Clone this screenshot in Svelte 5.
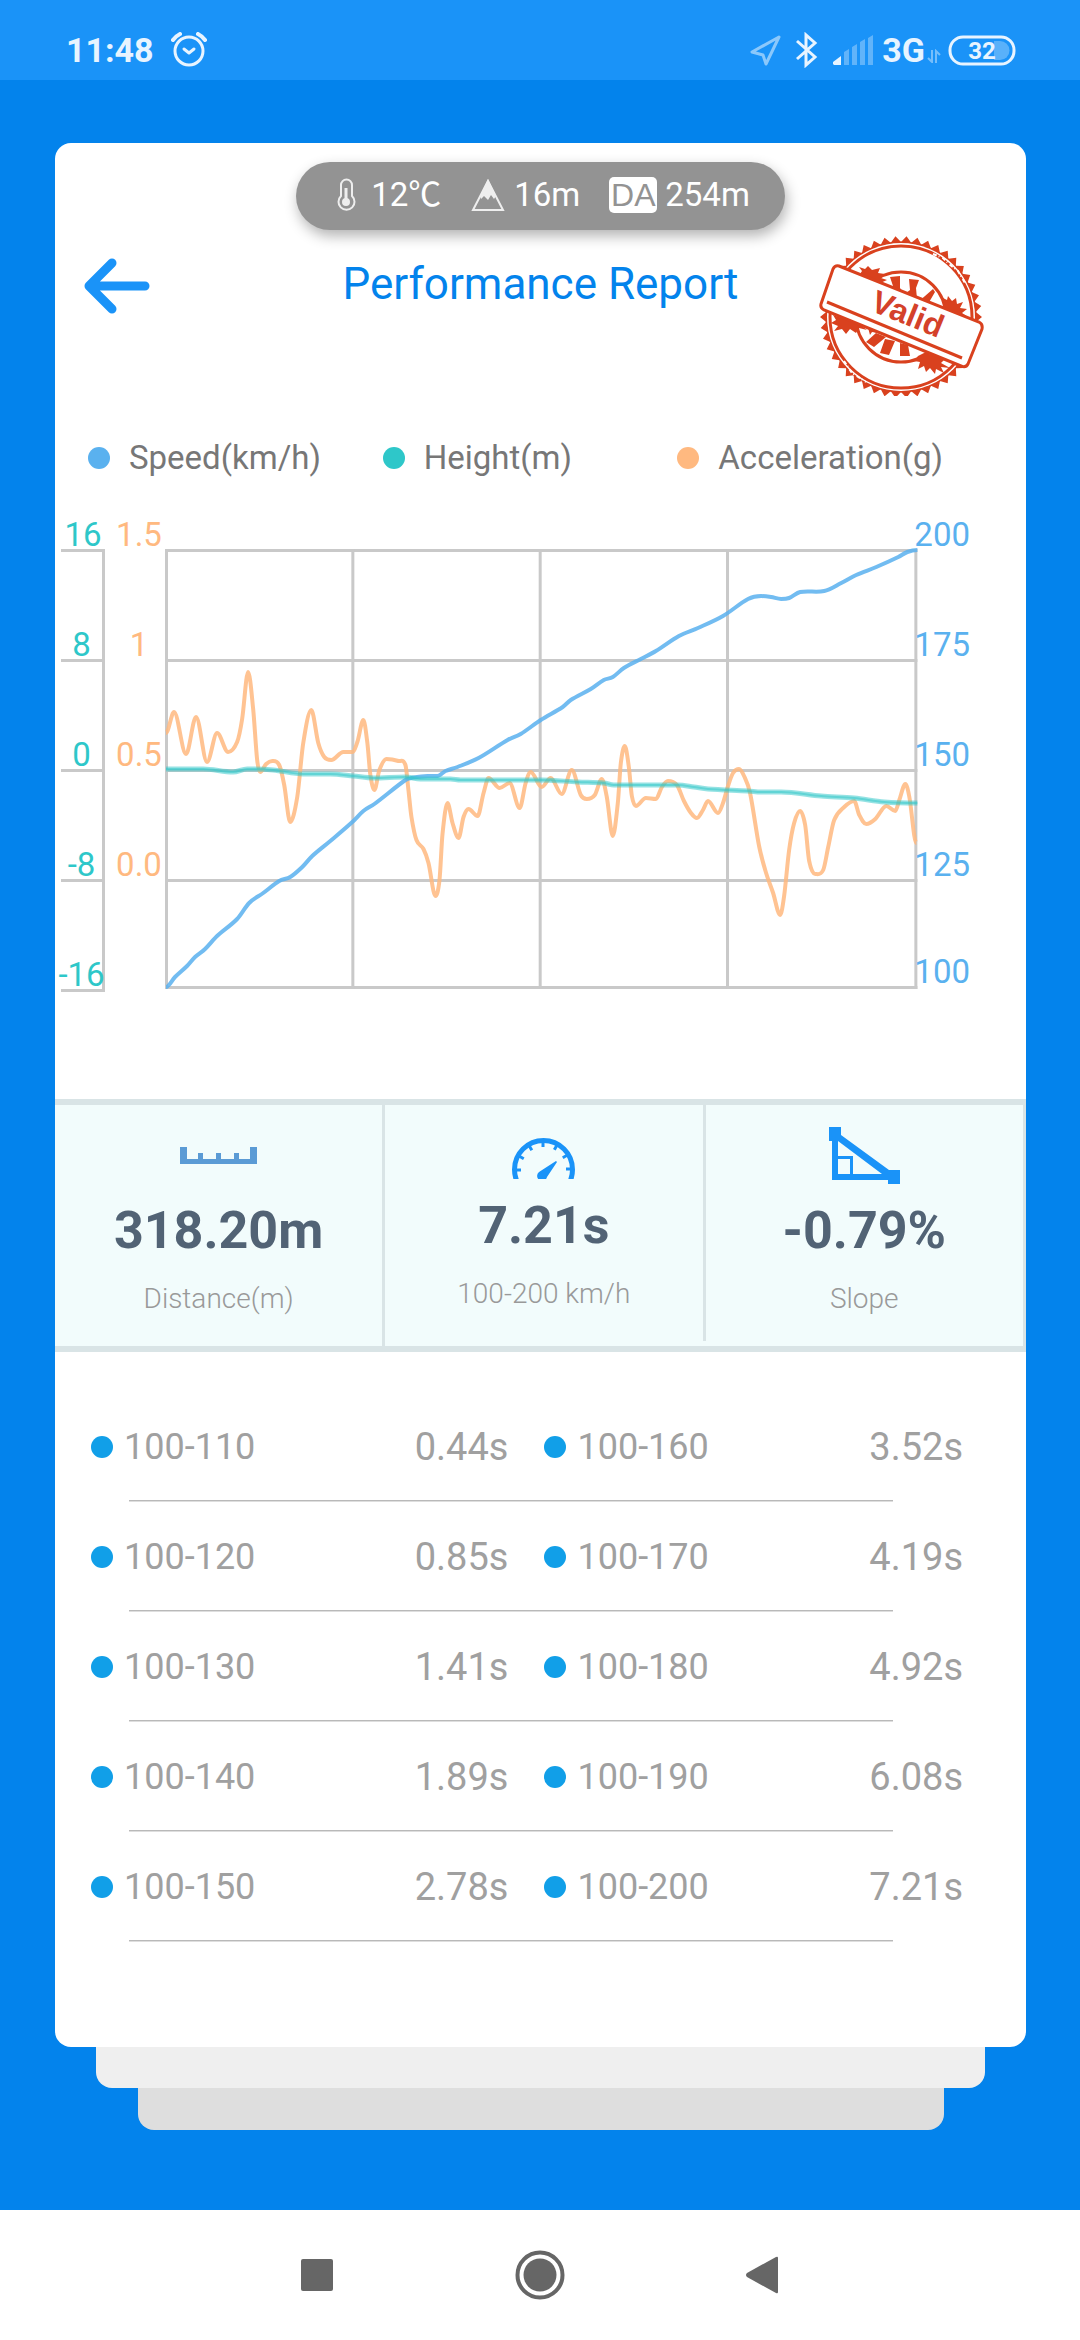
<script lang="ts">
    const legend = [
        { name: 'Speed(km/h)', tone: 'speed' },
        { name: 'Height(m)', tone: 'height' },
        { name: 'Acceleration(g)', tone: 'accel' }
    ];

    const heightTicks = ['16', '8', '0', '-8', '-16'];
    const accelTicks = ['1.5', '1', '0.5', '0.0'];
    const speedTicks = ['200', '175', '150', '125', '100'];

    const splits = [
        ['100-110', '0.44s', '100-160', '3.52s'],
        ['100-120', '0.85s', '100-170', '4.19s'],
        ['100-130', '1.41s', '100-180', '4.92s'],
        ['100-140', '1.89s', '100-190', '6.08s'],
        ['100-150', '2.78s', '100-200', '7.21s']
    ];

    // samples in plot units, 751 x 440, y pointing down
    const accel = [
        [1, 184], [9, 163], [21, 205], [31, 168], [42, 213], [52, 184], [63, 203], [72, 193], [77, 170],
        [83, 123], [88, 160], [92, 211], [95, 223], [101, 215], [107, 212], [114, 216], [119, 236],
        [125, 273], [132, 248], [138, 194], [146, 161], [153, 194], [159, 208], [166, 211], [178, 203],
        [187, 203], [192, 193], [198, 171], [202, 194], [205, 226], [209, 241], [214, 221], [221, 210],
        [233, 212], [240, 216], [243, 241], [246, 268], [251, 291], [258, 300], [263, 314], [270, 347],
        [274, 331], [277, 285], [282, 254], [287, 274], [293, 289], [298, 268], [303, 260], [312, 267],
        [318, 244], [323, 229], [334, 239], [344, 234], [354, 259], [360, 234], [365, 223], [376, 238],
        [385, 229], [396, 245], [406, 221], [415, 246], [421, 250], [429, 246], [436, 230], [441, 248],
        [447, 287], [452, 254], [455, 214], [459, 197], [463, 218], [466, 247], [470, 257], [480, 249],
        [490, 250], [496, 238], [502, 232], [511, 236], [518, 252], [525, 264], [531, 269], [537, 261],
        [542, 252], [552, 264], [557, 254], [562, 237], [567, 224], [573, 220], [578, 227], [584, 244],
        [593, 297], [600, 324], [607, 344], [614, 366], [618, 347], [623, 301], [628, 274], [634, 262],
        [639, 276], [643, 312], [649, 325], [657, 321], [662, 298], [668, 271], [678, 258], [688, 252],
        [693, 266], [700, 275], [709, 270], [720, 257], [729, 262], [733, 251], [739, 235], [743, 248],
        [750, 294]
    ];
    const speed = [
        [1, 438], [10, 428], [22, 417], [30, 408], [40, 400], [52, 387], [72, 370], [84, 354], [98, 344],
        [114, 332], [125, 328], [137, 318], [147, 307], [165, 292], [187, 273], [198, 262], [209, 255],
        [240, 231], [246, 229], [262, 227], [272, 227], [280, 222], [292, 218], [313, 209], [342, 191],
        [355, 185], [375, 171], [397, 158], [405, 151], [425, 140], [438, 131], [447, 128], [458, 119],
        [475, 110], [490, 102], [513, 87], [532, 79], [557, 67], [582, 50], [595, 47], [605, 48],
        [615, 50], [623, 49], [634, 43], [658, 42], [675, 34], [690, 26], [710, 18], [732, 8], [741, 3],
        [751, 1]
    ];
    const height = [
        [1, 220], [38, 220], [68, 223], [82, 220], [108, 221], [138, 225], [165, 225], [188, 227],
        [208, 229], [240, 228], [255, 230], [285, 230], [295, 231], [375, 231], [412, 233], [438, 234],
        [448, 236], [512, 236], [528, 238], [542, 240], [582, 242], [595, 243], [615, 243], [655, 247],
        [688, 249], [718, 253], [751, 254]
    ];

    // smooth each segment, flattening the tangent at local peaks
    function toPath(points: number[][]) {
        const slope = points.map((p, i) => {
            const a = points[i - 1];
            const b = points[i + 1];
            if (!a || !b) return 0;
            if ((p[1] - a[1]) * (b[1] - p[1]) <= 0) return 0;
            return (b[1] - a[1]) / (b[0] - a[0]);
        });

        let d = `M${points[0][0]} ${points[0][1]}`;
        for (let i = 1; i < points.length; i++) {
            const [x0, y0] = points[i - 1];
            const [x1, y1] = points[i];
            const h = (x1 - x0) / 3;
            d += `C${x0 + h} ${y0 + slope[i - 1] * h} ${x1 - h} ${y1 - slope[i] * h} ${x1} ${y1}`;
        }
        return d;
    }

    function toothedRing(cx: number, cy: number, inner: number, outer: number, teeth: number) {
        let d = '';
        for (let i = 0; i < teeth * 2; i++) {
            const angle = (i * Math.PI) / teeth;
            const r = i % 2 ? inner : outer;
            d += `${i ? 'L' : 'M'}${cx + r * Math.cos(angle)} ${cy + r * Math.sin(angle)}`;
        }
        return d + 'Z';
    }
</script>

<div class="screen">
    <header class="status">
        <span class="clock">11:48</span>
        <svg class="alarm" width="36" height="36" viewBox="0 0 36 36" fill="none" stroke="currentColor" stroke-width="3" stroke-linecap="round" stroke-linejoin="round">
            <circle cx="18" cy="19" r="14" />
            <path d="M13 17l5 4 5-4" />
            <path d="M2 8q3-4 7-6M34 8q-3-4-7-6" stroke-width="4" />
        </svg>

        <div class="signals">
            <svg class="faint" width="31" height="32" viewBox="0 0 31 32" fill="none" stroke="currentColor" stroke-width="3" stroke-linejoin="round">
                <path d="M29 3L2 18l11 3 3 9z" />
            </svg>
            <svg class="bluetooth" width="22" height="36" viewBox="0 0 22 36" fill="none" stroke="currentColor" stroke-width="3">
                <path d="M1 9l18 16-9 8V3l9 8L1 27" />
            </svg>
            <svg class="bars" width="41" height="30" viewBox="0 0 41 30" fill="currentColor">
                <path d="M0 29v-2l8-6v9H1z" />
                <path d="M11 17l5-3v16h-5zM19 12l5-3v21h-5zM27 7l5-3v26h-5zM35 3l5-3v30h-5z" opacity="0.35" />
            </svg>
            <span class="network">3G</span>
            <svg class="updown" width="14" height="14" viewBox="0 0 14 14" fill="none" stroke="currentColor" stroke-width="2">
                <path d="M5 1v12L1 9M9 14V2l4 4" />
            </svg>
            <span class="battery">
                <svg width="68" height="31" viewBox="0 0 68 31">
                    <path d="M46 6h6a9 9 0 0 1 0 19h-6z" fill="#fff" opacity="0.28" />
                    <rect x="2" y="2" width="64" height="27" rx="13" fill="none" stroke="currentColor" stroke-width="3" />
                    <text x="34" y="24" text-anchor="middle">32</text>
                </svg>
            </span>
        </div>
    </header>

    <main>
        <section class="card">
            <div class="weather">
                <span class="reading">
                    <svg width="34" height="34" viewBox="0 0 34 34" fill="none" stroke="currentColor" stroke-width="2">
                        <path d="M12 18V7a5 5 0 0 1 11 0v11a8 8 0 1 1-11 0z" />
                        <path d="M17 10v14" stroke-width="3" />
                        <circle cx="17" cy="24" r="3" fill="currentColor" />
                    </svg>
                    12℃
                </span>
                <span class="reading">
                    <svg width="36" height="34" viewBox="0 0 36 34" fill="currentColor">
                        <path d="M18 3L33 32H3z" fill="none" stroke="currentColor" stroke-width="2" />
                        <path d="M18 1l8 17-2 3-3-4-3 5-4-4-3 3-1-3z" />
                    </svg>
                    16m
                </span>
                <span class="reading"><abbr title="Density altitude">DA</abbr>254m</span>
            </div>

            <div class="heading">
                <button class="back" aria-label="Back">
                    <svg width="66" height="56" viewBox="0 0 66 56" fill="none" stroke="currentColor" stroke-width="9" stroke-linecap="round" stroke-linejoin="round">
                        <path d="M28 5L5 28l23 23M7 28h54" />
                    </svg>
                </button>
                <h1>Performance Report</h1>
                <svg class="stamp" width="166" height="160" viewBox="0 0 166 160" role="img" aria-label="Valid">
                    <path d={toothedRing(82, 81, 75, 81, 46)} />
                    <circle cx="82" cy="81" r="74" fill="#fff" />
                    <circle class="ring" cx="82" cy="81" r="71" stroke-width="3" />
                    <circle class="ring" cx="82" cy="81" r="75" stroke-width="1" />
                    <circle class="ring" cx="82" cy="81" r="45" stroke-width="3" />
                    <!-- spokes above and below the banner -->
                    <path d="M71 41l10 -1 0 12 5 7-11-3-8-4 7-2zM90 43l10 1-3 8 1 11-8 2-3-8 4-3zM106 60l8-7 2 3-7 12-10-2z" />
                    <path d="M57 97l-10 9 8 5 12-10zM66 103l-5 14 9 2 6-14zM81 107l0 13 10 0-2-11z" />
                    <!-- worn ink -->
                    <path d="M40 31l6 2 3-3 4 4 8-2-2 5 7 1-4 4 6 2-9 4-6-4-7 1 1-5-6-2 2-3z" />
                    <path d="M124 62l4 2 1-4 4 5 4-3 1 6 6-2-3 6 7 1-5 4 6 4-8-1 3 6-7-3 1 6-6-4-3 3-4-8z" />
                    <path d="M14 79l9 3 5-1 3 4 6-2 3 4 7-1-4 4 5 4-8-2-3 5-6-4-4 5-4-5-8 2 4-5-7-3 5-3z" />
                    <path d="M99 120l8-4 5 3 7-1 2 4 5 1-4 4 9 5-9-1 3 6-8-4-1 5-5-6-4 4-2-6-6 3 2-7-6-1z" />
                    <path d="M48 88l4 1-1 2 5-1 1 4 6 0-3 3-7-1-2 3z" />
                    <path class="scratch" d="M114 18l10 4 6 6 9 7 7 12M25 125l8 12 14 9" />
                    <path class="banner" d="M20 30q-4-1-6 3L2 68q-1 4 3 6l137 56q5 2 7-2l14-35q1-5-3-7z" />
                    <path class="ring" d="M8 66l135 56" stroke-width="3" />
                    <text x="50" y="74" transform="rotate(22 50 74)">Valid</text>
                </svg>
            </div>

            <ul class="legend">
                {#each legend as item}
                    <li><i class="dot {item.tone}"></i>{item.name}</li>
                {/each}
            </ul>

            <div class="chart">
                <ul class="axis height-axis">
                    {#each heightTicks as tick}<li>{tick}</li>{/each}
                </ul>
                <ul class="axis accel-axis">
                    {#each accelTicks as tick}<li>{tick}</li>{/each}
                </ul>
                <svg class="plot" viewBox="0 0 748 443" preserveAspectRatio="none">
                    <g class="grid">
                        {#each [1, 111, 221, 331, 438] as y}
                            <rect x="0" y={y - 1} width="751" height="3" />
                        {/each}
                        {#each [0, 186, 373, 560, 748] as x}
                            <rect {x} y="0" width="3" height="440" />
                        {/each}
                    </g>
                    <path class="line accel-line" d={toPath(accel)} />
                    <path class="line speed-line" d={toPath(speed)} />
                    <path class="line height-band" d={toPath(height)} />
                    <path class="line height-line" d={toPath(height)} />
                </svg>
                <ul class="axis speed-axis">
                    {#each speedTicks as tick}<li>{tick}</li>{/each}
                </ul>
            </div>

            <div class="stats">
                <div class="stat">
                    <div class="icon">
                        <svg width="77" height="17" viewBox="0 0 77 17" fill="#5b9bd5">
                            <path d="M0 0h7v12h11V6h5v6h13V6h5v6h13V6h5v6h11V0h7v17H0z" />
                        </svg>
                    </div>
                    <strong>318.20m</strong>
                    <span>Distance(m)</span>
                </div>
                <div class="stat short">
                    <div class="icon">
                        <svg width="63" height="57" viewBox="0 0 63 57" fill="none" stroke="#1a93f8">
                            <circle cx="31.5" cy="47.5" r="29" stroke-width="5" />
                            {#each [0, 30, 60, 90, 120, 150, 180] as angle}
                                <path d="M4 48h5" stroke-width="3" transform="rotate({angle} 31.5 47.5)" />
                            {/each}
                            <path d="M27 50L44 39l1 1-10 15a5 5 0 1 1-8-5z" fill="#1a93f8" stroke="none" />
                        </svg>
                    </div>
                    <strong>7.21s</strong>
                    <span>100-200 km/h</span>
                </div>
                <div class="stat">
                    <div class="icon">
                        <svg width="71" height="57" viewBox="0 0 71 57" fill="#1a93f8">
                            <path d="M0 0h12v8l48 35h11v14H59v-4H3V14H0zM9 14v15h15v18h29L9 14zM9 32v15h12V32z" fill-rule="evenodd" />
                        </svg>
                    </div>
                    <strong>-0.79%</strong>
                    <span>Slope</span>
                </div>
            </div>

            <table class="splits">
                <tbody>
                    {#each splits as [rangeA, timeA, rangeB, timeB]}
                        <tr>
                            <th scope="row"><i class="dot"></i>{rangeA}</th>
                            <td class="inner">{timeA}</td>
                            <th scope="row"><i class="dot"></i>{rangeB}</th>
                            <td>{timeB}</td>
                        </tr>
                    {/each}
                </tbody>
            </table>
        </section>
        <div class="sheet near"></div>
        <div class="sheet far"></div>
    </main>

    <nav>
        <button aria-label="Recent apps">
            <svg width="50" height="50" viewBox="0 0 50 50"><rect x="9" y="9" width="32" height="32" rx="2" /></svg>
        </button>
        <button aria-label="Home">
            <svg width="50" height="50" viewBox="0 0 50 50">
                <circle cx="25" cy="25" r="22.5" fill="none" stroke="#666" stroke-width="4" />
                <circle cx="25" cy="25" r="16.5" />
            </svg>
        </button>
        <button aria-label="Back">
            <svg width="50" height="50" viewBox="0 0 50 50"><path d="M8 25q0-1 1-2L38 7q2-1 2 1v34q0 2-2 1L9 27q-1-1-1-2z" /></svg>
        </button>
    </nav>
</div>

<style>
    :global(body) {
        margin: 0;
        background: #0383ec;
    }

    .screen {
        display: flex;
        flex-direction: column;
        min-height: 100vh;
        font-family: Roboto, "Noto Sans CJK SC", sans-serif;
        font-size: 33px;
        line-height: 42px;
    }

    svg {
        display: block;
        flex: none;
    }

    ul {
        margin: 0;
        padding: 0;
        list-style: none;
    }

    button {
        padding: 0;
        border: none;
        background: none;
        cursor: pointer;
    }

    /* status bar */
    .status {
        display: flex;
        align-items: center;
        height: 60px;
        padding: 20px 64px 0 66px;
        background: #1a93f8;
        color: #e8f4ff;
    }

    .clock, .network {
        font-size: 34px;
        font-weight: 700;
    }

    .alarm {
        margin-left: 17px;
    }

    .signals {
        display: flex;
        align-items: center;
        margin-left: auto;
    }

    .faint {
        opacity: 0.55;
    }

    .bluetooth {
        margin: 0 15px;
    }

    .bars {
        margin-right: 8px;
    }

    .updown {
        align-self: flex-end;
        margin: 0 7px 8px 2px;
        opacity: 0.45;
    }

    .battery text {
        fill: currentColor;
        font-size: 24px;
        font-weight: 700;
    }

    /* card */
    main {
        flex: 1;
        padding: 63px 54px 80px 55px;
    }

    .card {
        padding: 19px 0 105px;
        border-radius: 16px;
        background: #fff;
    }

    .sheet {
        height: 41px;
        border-radius: 0 0 16px 16px;
    }

    .near {
        margin: 0 41px;
        background: #efefef;
    }

    .far {
        height: 42px;
        margin: 0 82px 0 83px;
        background: #dedede;
    }

    .weather {
        display: flex;
        align-items: center;
        justify-content: center;
        gap: 29px;
        box-sizing: border-box;
        width: fit-content;
        height: 68px;
        margin: 0 auto;
        padding: 0 35px 2px 33px;
        border-radius: 34px;
        background: #939393;
        box-shadow: 2px 6px 14px rgba(0, 0, 0, 0.3);
        color: #fff;
    }

    .reading {
        display: flex;
        align-items: center;
        gap: 8px;
        white-space: nowrap;
    }

    .reading svg {
        color: #eee;
    }

    abbr {
        width: 48px;
        border-radius: 5px;
        background: #fff;
        color: #939393;
        font: 32px/36px "Liberation Sans", sans-serif;
        text-align: center;
        text-decoration: none;
    }

    .heading {
        display: grid;
        grid-template-columns: 1fr auto 1fr;
        align-items: start;
        padding: 6px 29px 0;
    }

    .back {
        justify-self: start;
        margin-top: 22px;
        color: #1a93f8;
    }

    h1 {
        margin: 22px 0 0;
        color: #0383ec;
        font-size: 44px;
        font-weight: 400;
        line-height: 52px;
    }

    .stamp {
        justify-self: end;
        margin-right: 12px;
        fill: #d9411e;
    }

    .ring {
        fill: none;
        stroke: #d9411e;
    }

    .banner {
        fill: #fff;
        stroke: #d9411e;
        stroke-width: 3;
    }

    .scratch {
        fill: none;
        stroke: #fff;
        stroke-width: 2;
        stroke-dasharray: 4 2 1 3;
    }

    .stamp text {
        fill: #d4412a;
        font: 700 32px "Liberation Sans", sans-serif;
    }

    .dot {
        width: 22px;
        height: 22px;
        border-radius: 50%;
        background: #119fe8;
    }

    .legend {
        display: grid;
        grid-template-columns: repeat(3, 1fr);
        margin-top: 41px;
        padding: 0 54px 0 33px;
        color: #777;
    }

    .legend li {
        display: flex;
        align-items: center;
        gap: 19px;
        white-space: nowrap;
    }

    .dot.speed {
        background: #5ab1ef;
    }

    .dot.height {
        background: #2ec7c9;
    }

    .dot.accel {
        background: #ffb980;
    }

    /* chart */
    .chart {
        display: flex;
        align-items: flex-start;
        margin: 13px 0 107px;
        padding: 0 56px 0 6px;
    }

    .axis li {
        display: flex;
        align-items: flex-end;
        justify-content: center;
        box-sizing: border-box;
        height: 110px;
        border-bottom: 3px solid transparent;
        line-height: 28px;
    }

    .axis li:first-child {
        height: 60px;
    }

    .height-axis {
        width: 44px;
        color: #2ec7c9;
    }

    .height-axis li {
        border-right: 3px solid #c9c9c9;
        border-bottom-color: #c9c9c9;
    }

    .height-axis li:first-child {
        border-right: none;
    }

    .accel-axis {
        box-sizing: border-box;
        width: 60px;
        padding-left: 8px;
        color: #ffb980;
    }

    .plot {
        flex: 1;
        min-width: 0;
        height: 443px;
        margin-top: 57px;
        overflow: visible;
    }

    .grid {
        fill: #c9c9c9;
    }

    .line {
        fill: none;
        stroke-linejoin: round;
        vector-effect: non-scaling-stroke;
    }

    .accel-line {
        stroke: #ffb980;
        stroke-width: 4;
        opacity: 0.85;
    }

    .speed-line {
        stroke: #5ab1ef;
        stroke-width: 4;
        opacity: 0.85;
    }

    .height-band {
        stroke: #2ec7c9;
        stroke-width: 5;
        opacity: 0.5;
    }

    .height-line {
        stroke: #2ec7c9;
        stroke-width: 2;
        opacity: 0.5;
    }

    .speed-axis {
        color: #5ab1ef;
    }

    .speed-axis li:last-child {
        height: 107px;
    }

    /* headline figures */
    .stats {
        display: grid;
        grid-template-columns: 34fr 33fr 33fr;
        border: solid #d9e4e6;
        border-width: 6px 0;
        background: #f2fcfc;
    }

    .stat {
        display: flex;
        flex-direction: column;
        align-items: center;
        padding: 17px 0 29px;
        border-right: 3px solid #d9e4e6;
        color: #999;
    }

    .stat.short {
        margin-bottom: 5px;
        padding-top: 12px;
    }

    .icon {
        display: grid;
        place-items: center;
        height: 67px;
    }

    .stat strong {
        margin: 12px 0 20px;
        color: #526375;
        font-size: 52px;
        line-height: 60px;
    }

    .stat span {
        font-size: 28px;
        font-weight: 300;
        line-height: 36px;
    }

    /* split times */
    .splits {
        width: calc(100% - 99px);
        margin: 40px 63px 0 36px;
        border-collapse: collapse;
        table-layout: fixed;
        color: #a0a0a0;
    }

    .splits tr {
        height: 110px;
        background: linear-gradient(#b9b9b9 1px, #dedede 1px) 38px 100% / calc(100% - 108px) 2px no-repeat;
    }

    .splits th, .splits td {
        width: 24%;
        padding: 0;
        font-weight: 400;
        text-align: left;
    }

    .splits th:first-child, .splits .inner {
        width: 26%;
    }

    .splits th {
        font-size: 36px;
    }

    .splits td {
        font-size: 38px;
        text-align: right;
    }

    .splits .inner {
        padding-right: 36px;
        box-sizing: border-box;
    }

    .splits .dot {
        display: inline-block;
        margin-right: 11px;
        vertical-align: 1px;
    }

    /* system navigation */
    nav {
        display: flex;
        justify-content: center;
        height: 130px;
        background: #fff;
    }

    nav button {
        display: grid;
        place-items: center;
        width: 223px;
        fill: #666;
    }
</style>
